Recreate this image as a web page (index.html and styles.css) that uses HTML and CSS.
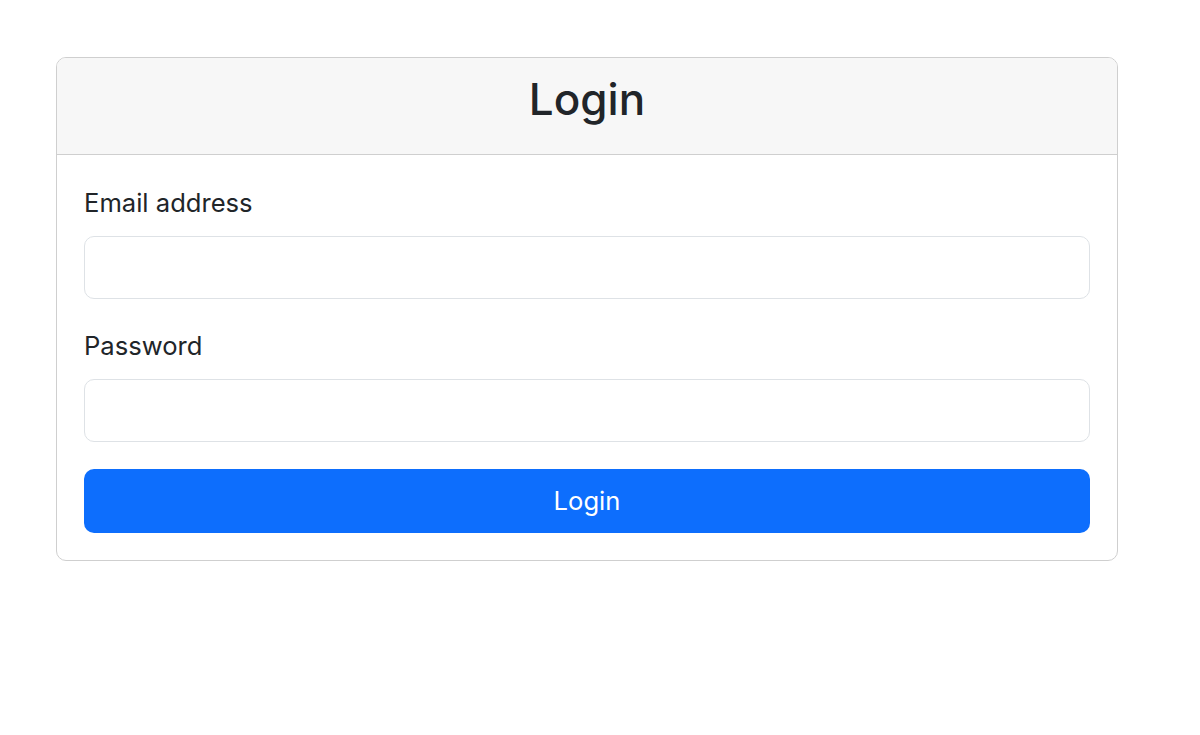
FILE: index.html
```html
<!DOCTYPE html>
<html lang="en">
<head>
<meta charset="utf-8">
<title>Login</title>
<link rel="stylesheet" href="styles.css">
</head>
<body>
<div class="page">
  <div class="card">
    <div class="card-header">
      <h3 class="title">Login</h3>
    </div>
    <form class="card-body">
      <div class="field">
        <label class="label" for="email">Email address</label>
        <input class="input" id="email" type="email">
      </div>
      <div class="field">
        <label class="label" for="password">Password</label>
        <input class="input" id="password" type="password">
      </div>
      <button class="btn" type="button">Login</button>
    </form>
  </div>
</div>
</body>
</html>
```
FILE: styles.css
```css
* { box-sizing: border-box; }
html, body { margin: 0; padding: 0; background: #fff; }
body {
  font-family: Inter, "Liberation Sans", Arial, sans-serif;
  color: #212529;
  font-size: 25.6px;
  line-height: 1.5;
}
.page {
  padding: 57px 83px 0 56px;
}
.card {
  border: 1px solid #cfcfcf;
  border-radius: 10px;
  overflow: hidden;
  width: 1062px;
}
.card-header {
  background: #f7f7f7;
  border-bottom: 1px solid #cfcfcf;
  padding: 14px 27px 28px;
  text-align: center;
}
.title {
  margin: 0;
  font-size: 44px;
  font-weight: 500;
  line-height: 54px;
}
.card-body {
  margin: 0;
  padding: 28px 27px 27px;
  display: flex;
  flex-direction: column;
}
.field {
  display: flex;
  flex-direction: column;
  margin-bottom: 27px;
}
.label {
  line-height: 40px;
  margin-bottom: 13px;
}
.input {
  height: 63px;
  border: 1px solid #dee2e6;
  border-radius: 10px;
  background: #fff;
  font: inherit;
  padding: 0 19px;
}
.btn {
  height: 64px;
  border: 0;
  border-radius: 10px;
  background: #0d6efd;
  color: #fff;
  font: inherit;
  line-height: 1.5;
  padding: 0;
}
```
